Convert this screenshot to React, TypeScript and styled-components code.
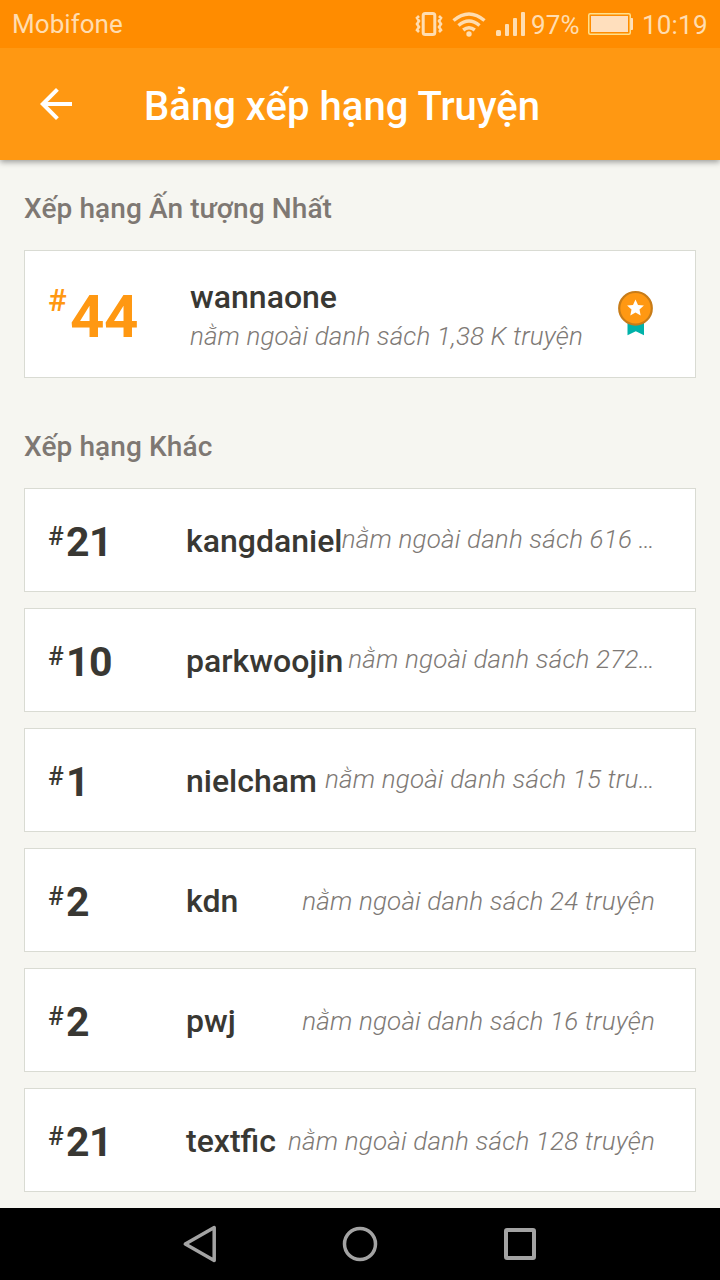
import React from 'react';
import styled, { createGlobalStyle } from 'styled-components';

const GlobalStyle = createGlobalStyle`
  * { box-sizing: border-box; }
  body { margin: 0; background: #f6f6f1; font-family: Roboto, "Liberation Sans", sans-serif; }
`;

const Screen = styled.div`
  display: flex;
  flex-direction: column;
  width: 720px;
  height: 1280px;
  overflow: hidden;
  background: #f6f6f1;
`;

const StatusBar = styled.div`
  display: flex;
  align-items: center;
  justify-content: space-between;
  height: 48px;
  flex: none;
  padding: 0 12px;
  background: #ff8c00;
  color: #ffddb0;
  font-size: 26px;
  line-height: 48px;
  z-index: 2;
`;

const Carrier = styled.span`
  letter-spacing: 0.05px;
`;

const StatusIcons = styled.div`
  display: flex;
  align-items: center;
  height: 48px;
  svg { display: block; flex: none; }
`;

const Percent = styled.span`
  width: 57px;
  white-space: nowrap;
  padding-top: 2px;
  letter-spacing: 0.2px;
`;

const Clock = styled.span`
  width: 66px;
  white-space: nowrap;
  padding-top: 2px;
  letter-spacing: 0.2px;
`;

const AppBar = styled.header`
  display: flex;
  align-items: center;
  flex: none;
  height: 112px;
  padding: 6px 0 0 32px;
  background: #ff9812;
  box-shadow: 0 2px 6px rgba(0, 0, 0, 0.38);
  z-index: 1;
  svg { display: block; margin: -6px 64px 0 0; }
`;

const Title = styled.h1`
  margin: 0;
  color: #fff;
  font-size: 40px;
  line-height: 48px;
  font-weight: 500;
  letter-spacing: 0.03px;
`;

const Content = styled.main`
  display: flex;
  flex-direction: column;
  flex: 1;
  padding: 0 24px;
`;

const SectionTitle = styled.h2<{ $top: number }>`
  margin: ${p => p.$top}px 0 23px;
  color: #7e7873;
  font-size: 28px;
  line-height: 36px;
  font-weight: 500;
  letter-spacing: 0.1px;
`;

const Card = styled.div<{ $tall?: boolean }>`
  display: flex;
  align-items: ${p => (p.$tall ? 'flex-start' : 'center')};
  height: ${p => (p.$tall ? 128 : 104)}px;
  padding-left: 23px;
  background: #fff;
  border: 1px solid #d9dbd3;
`;

const Rank = styled.div<{ $tall?: boolean }>`
  display: flex;
  align-items: flex-start;
  flex: none;
  width: ${p => (p.$tall ? 142 : 138)}px;
  padding-top: ${p => (p.$tall ? 31 : 5)}px;
  color: ${p => (p.$tall ? '#ff9812' : '#393833')};
`;

const Hash = styled.span<{ $tall?: boolean }>`
  width: ${p => (p.$tall ? 22 : 18)}px;
  font-size: ${p => (p.$tall ? 31 : 26)}px;
  line-height: ${p => (p.$tall ? 38 : 36)}px;
  font-weight: 500;
`;

const Value = styled.span<{ $tall?: boolean }>`
  font-size: ${p => (p.$tall ? 60 : 41)}px;
  line-height: ${p => (p.$tall ? 70 : 48)}px;
  padding-bottom: ${p => (p.$tall ? 0 : 2)}px;
  font-weight: 700;
  letter-spacing: -0.4px;
`;

const Details = styled.div`
  display: flex;
  flex-direction: column;
  flex: 1;
  padding-top: 26px;
`;

const Name = styled.span`
  color: #393833;
  font-size: 32px;
  line-height: 40px;
  font-weight: 500;
  white-space: nowrap;
`;

const RowName = styled(Name)`
  padding-top: 2px;
`;

const Note = styled.span`
  color: #7e7975;
  font-size: 26px;
  line-height: 38px;
  font-weight: 300;
  font-style: italic;
  letter-spacing: 0.12px;
  white-space: nowrap;
`;

const RowNote = styled(Note)<{ $clipped?: boolean }>`
  flex: 1;
  min-width: 0;
  margin-right: 40px;
  padding: ${p => (p.$clipped ? '0 0 2px' : '2px 0 0')};
  display: flex;
  justify-content: flex-end;
  letter-spacing: 0.17px;
`;

const Medal = styled.svg`
  display: block;
  flex: none;
  margin: 39px 41px 0 0;
`;

const List = styled.div`
  display: flex;
  flex-direction: column;
  gap: 16px;
`;

const NavBar = styled.nav`
  display: flex;
  align-items: center;
  justify-content: center;
  gap: 120px;
  flex: none;
  height: 72px;
  background: #000;
  svg { display: block; }
`;

const rows = [
  { rank: '21', name: 'kangdaniel', note: 'nằm ngoài danh sách 616 …', clipped: true },
  { rank: '10', name: 'parkwoojin', note: 'nằm ngoài danh sách 272…', clipped: true },
  { rank: '1', name: 'nielcham', note: 'nằm ngoài danh sách 15 tru…', clipped: true },
  { rank: '2', name: 'kdn', note: 'nằm ngoài danh sách 24 truyện' },
  { rank: '2', name: 'pwj', note: 'nằm ngoài danh sách 16 truyện' },
  { rank: '21', name: 'textfic', note: 'nằm ngoài danh sách 128 truyện' },
];

const StatusGlyphs = () => (
  <svg width="116" height="48" viewBox="415 0 116 48" fill="none" stroke="#ffddb0">
    <rect x="423.2" y="13.5" width="11.600" height="21" rx="2" strokeWidth="3" />
    <path d="M419 16l-2 2 2 3-2 3 2 3-2 3 2 2M439 16l2 2-2 3 2 3-2 3 2 3-2 2" strokeWidth="2.600" />
    <path d="M453.500 20.500Q469 7.500 484.500 20.500M458.500 25.500Q469 16.500 479.500 25.500M463.200 30Q469 25.500 474.800 30" strokeWidth="3.500" />
    <circle cx="469" cy="34" r="2.700" fill="#ffddb0" stroke="none" />
    <g fill="#ffddb0" stroke="none">
      <rect x="496" y="30" width="5" height="6" rx="1.500" />
      <rect x="505" y="24" width="4" height="12" rx="1" />
      <rect x="513" y="18" width="4" height="18" rx="1" />
      <rect x="521" y="12" width="4" height="24" rx="1" />
    </g>
  </svg>
);

const Battery = () => (
  <svg width="54" height="48" viewBox="588 0 54 48">
    <rect x="588.750" y="13.750" width="41.500" height="20.500" rx="1.500" fill="none" stroke="#ffe08c" strokeWidth="1.500" />
    <rect x="591" y="16" width="37" height="16" fill="#ffdfbd" />
    <path d="M631 18.500h1.500v11H631z" fill="#ffdfbd" stroke="#ffdfbd" strokeWidth="1" />
  </svg>
);

export default function App() {
  return (
    <>
      <GlobalStyle />
      <Screen>
        <StatusBar>
          <Carrier>Mobifone</Carrier>
          <StatusIcons>
            <StatusGlyphs />
            <Percent>97%</Percent>
            <Battery />
            <Clock>10:19</Clock>
          </StatusIcons>
        </StatusBar>
        <AppBar>
          <svg width="48" height="48" viewBox="0 0 24 24" fill="#fff">
            <path d="M20 11H7.830l5.590-5.590L12 4l-8 8 8 8 1.410-1.410L7.830 13H20v-2z" />
          </svg>
          <Title>Bảng xếp hạng Truyện</Title>
        </AppBar>
        <Content>
          <SectionTitle $top={31}>Xếp hạng Ấn tượng Nhất</SectionTitle>
          <Card $tall>
            <Rank $tall>
              <Hash $tall>#</Hash>
              <Value $tall>44</Value>
            </Rank>
            <Details>
              <Name>wannaone</Name>
              <Note>nằm ngoài danh sách 1,38 K truyện</Note>
            </Details>
            <Medal width="36" height="46" viewBox="0 0 36 46">
              <path d="M9.500 31h16.500v14.300l-8.200-4-8.300 4z" fill="#00b2a9" />
              <circle cx="17.500" cy="18.300" r="16.300" fill="#ff9812" stroke="#c87c18" strokeWidth="2.200" />
              <path d="M17.500 9.400l2.500 5.500 5.900.700-4.400 4 1.200 5.900-5.200-3-5.200 3 1.200-5.900-4.400-4 5.900-.700z" fill="#fff" />
            </Medal>
          </Card>
          <SectionTitle $top={51}>Xếp hạng Khác</SectionTitle>
          <List>
            {rows.map(row => (
              <Card key={row.name}>
                <Rank>
                  <Hash>#</Hash>
                  <Value>{row.rank}</Value>
                </Rank>
                <RowName>{row.name}</RowName>
                <RowNote $clipped={row.clipped}>{row.note}</RowNote>
              </Card>
            ))}
          </List>
        </Content>
        <NavBar>
          <svg width="40" height="40" viewBox="0 0 40 40" fill="none" stroke="#a3a3a3" strokeWidth="3.500" strokeLinejoin="round">
            <path d="M5.300 20L34.200 3.500v33z" />
          </svg>
          <svg width="40" height="40" viewBox="0 0 40 40" fill="none" stroke="#a3a3a3" strokeWidth="3.500">
            <circle cx="20" cy="20" r="15.500" />
          </svg>
          <svg width="40" height="40" viewBox="0 0 40 40" fill="none" stroke="#a3a3a3" strokeWidth="4">
            <rect x="6" y="6" width="28" height="28" rx="1" />
          </svg>
        </NavBar>
      </Screen>
    </>
  );
}
